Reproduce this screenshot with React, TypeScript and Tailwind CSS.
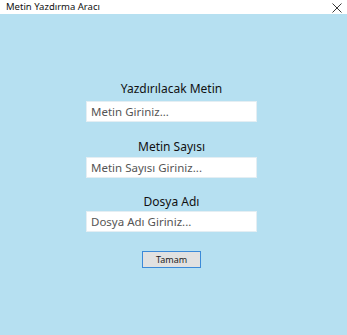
import React from "react";

function Field({
  label,
  placeholder,
  mt,
  gap,
}: {
  label: string;
  placeholder: string;
  mt: string;
  gap: string;
}) {
  return (
    <div className={`flex flex-col items-center ${mt}`}>
      <div className="text-[12px] leading-[15px] text-[#111]">{label}</div>
      <div
        className={`${gap} w-[171px] h-[21px] bg-white flex items-center pl-[4px] text-[11.5px] text-[#555] border border-[#e4eef3]`}
      >
        {placeholder}
      </div>
    </div>
  );
}

export default function App() {
  return (
    <div
      className="w-[347px] h-[335px] flex flex-col bg-[#b6e0f1]"
      style={{ fontFamily: '"Noto Sans", "Open Sans", sans-serif' }}
    >
      <div className="h-[14px] bg-white flex items-center justify-between pl-[6px] pr-[5px]">
        <span className="text-[9.5px] text-[#111] leading-none">Metin Yazdırma Aracı</span>
        <svg width="10" height="10" viewBox="0 0 10 10" className="mt-[2px]">
          <path d="M0.5 0.5 L9.5 9.5 M9.5 0.5 L0.5 9.5" stroke="#222" strokeWidth="0.9" fill="none" />
        </svg>
      </div>
      <div className="flex flex-col items-center pr-[4px]">
        <Field label="Yazdırılacak Metin" placeholder="Metin Giriniz..." mt="mt-[67px]" gap="mt-[5px]" />
        <Field label="Metin Sayısı" placeholder="Metin Sayısı Giriniz..." mt="mt-[17px]" gap="mt-[3px]" />
        <Field label="Dosya Adı" placeholder="Dosya Adı Giriniz..." mt="mt-[16px]" gap="mt-[2px]" />
        <div className="mt-[19px] w-[59px] h-[17px] bg-[#e1e1e1] border border-[#3c8ad8] flex items-center justify-center text-[9px] text-[#222]">
          Tamam
        </div>
      </div>
    </div>
  );
}
